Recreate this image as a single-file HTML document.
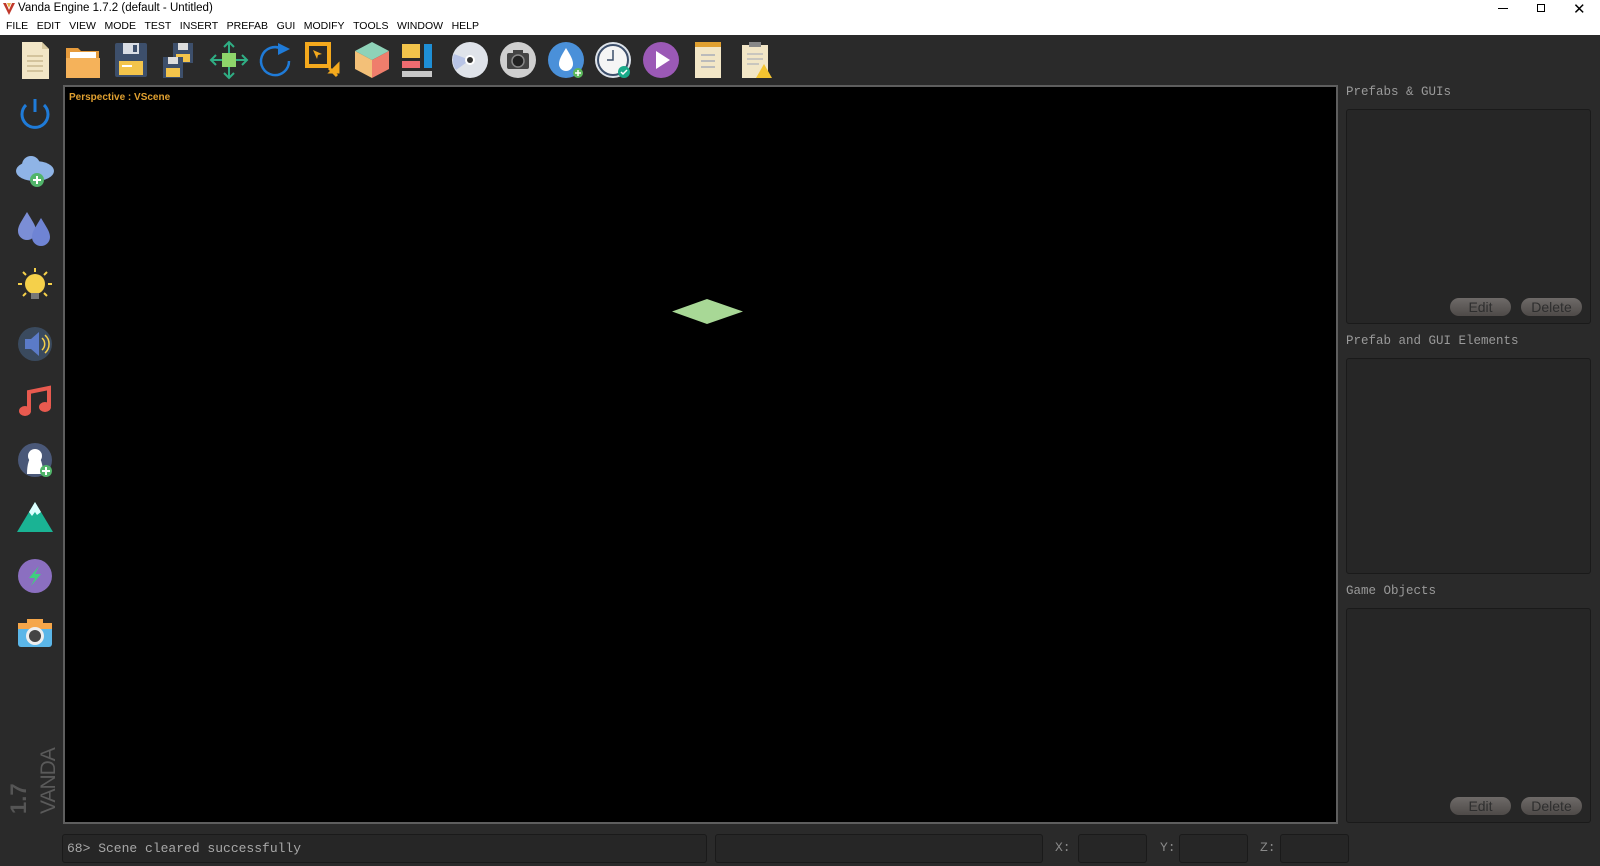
<!DOCTYPE html>
<html><head><meta charset="utf-8"><style>
*{margin:0;padding:0;box-sizing:border-box}
body{width:1600px;height:866px;overflow:hidden;background:#2a2a2a;font-family:"Liberation Sans",sans-serif;position:relative}
.a{position:absolute}
#top{left:0;top:0;width:1600px;height:35px;background:#fff}
#title{left:18px;top:2px;font-size:11.5px;color:#000}
#menu{left:6px;top:20px;font-size:10.5px;color:#000;word-spacing:0}
#menu span{margin-right:8.5px}
#tb{left:0;top:35px;width:1600px;height:48px;background:#2a2a2a}
#vp{left:63px;top:85px;width:1275px;height:739px;background:#000;border:2px solid #5e5e5e}
#persp{left:69px;top:92px;font-size:10px;font-weight:bold;color:#e0a030}
.lbl{position:absolute;left:1346px;font-family:"Liberation Mono",monospace;font-size:12.5px;color:#9a9a9a}
.box{position:absolute;left:1346px;width:245px;background:#262626;border:1px solid #1a1a1a;border-radius:3px}
.btn{position:absolute;width:61px;height:18px;border-radius:9px;background:linear-gradient(#6e6a68,#4e4a48);color:#2e2e2e;font-size:14px;text-align:center;line-height:18px}
.sb{position:absolute;top:834px;height:29px;background:#262626;border:1px solid #1a1a1a;border-radius:3px}
.xyz{position:absolute;top:840px;font-family:"Liberation Mono",monospace;font-size:13px;color:#8a8a8a}
</style></head><body>
<div class="a" id="top"></div>
<svg class="a" style="left:2px;top:2px" width="14" height="14"><path d="M1 1 L7 13 L13 1 L10 1 L7 8 L4 1Z" fill="#c0392b"/><path d="M5 1 L7 6 L9 1" fill="#e8b04a"/></svg>
<div class="a" id="title">Vanda Engine 1.7.2 (default - Untitled)</div>
<div class="a" id="menu"><span>FILE</span><span>EDIT</span><span>VIEW</span><span>MODE</span><span>TEST</span><span>INSERT</span><span>PREFAB</span><span>GUI</span><span>MODIFY</span><span>TOOLS</span><span>WINDOW</span><span>HELP</span></div>
<div class="a" style="left:1498px;top:8px;width:10px;height:1px;background:#000"></div>
<div class="a" style="left:1537px;top:4px;width:8px;height:8px;border:1px solid #000"></div>
<div class="a" style="left:1573px;top:0px;font-size:15px;color:#000">✕</div>
<div class="a" id="tb"></div>
<svg class="a" style="left:0;top:40px" width="800" height="40">
<g transform="translate(22,2)"><path d="M0 0h20l7 7v30H0z" fill="#f2e6c6"/><path d="M20 0v7h7" fill="#d8c9a0"/><g stroke="#c9b98f" stroke-width="1.5"><path d="M5 14h16M5 19h16M5 24h16M5 29h16"/></g></g>
<g transform="translate(66,4)"><path d="M0 4h12l3 3h18v27H0z" fill="#e69b3c"/><rect x="4" y="8" width="26" height="10" fill="#fff"/><path d="M0 14h34v20H0z" fill="#f5b25a"/></g>
<g transform="translate(115,3)"><rect width="32" height="34" fill="#3d4f6b" rx="2"/><rect x="8" y="0" width="16" height="11" fill="#d9dde4"/><rect x="18" y="2" width="4" height="7" fill="#3d4f6b"/><rect x="4" y="18" width="24" height="14" fill="#f3c44b"/><rect x="7" y="22" width="10" height="2" fill="#fff"/></g>
<g transform="translate(163,3)"><rect x="10" width="20" height="20" fill="#3d4f6b"/><rect x="15" width="10" height="7" fill="#ddd"/><rect x="13" y="11" width="14" height="8" fill="#f3c44b"/><rect x="0" y="14" width="20" height="21" fill="#3d4f6b"/><rect x="5" y="14" width="10" height="7" fill="#ddd"/><rect x="3" y="25" width="14" height="9" fill="#f3c44b"/></g>
<g transform="translate(211,2)" stroke="#2fae84" stroke-width="2" fill="none"><path d="M18 0v36M0 18h36M13 5l5-5 5 5M13 31l5 5 5-5M5 13l-5 5 5 5M31 13l5 5-5 5"/><rect x="11" y="11" width="14" height="14" fill="#8ed46a" stroke="none"/></g>
<g transform="translate(258,3)"><path d="M24 6 A14 14 0 1 0 31 18" fill="none" stroke="#1f7bd8" stroke-width="2.5"/><path d="M20 0 L32 6 L20 12Z" fill="#1f7bd8"/></g>
<g transform="translate(305,2)"><rect width="26" height="26" fill="#f4a91d"/><rect x="4" y="4" width="18" height="18" fill="#2a2a2a"/><path d="M8 8l9 4-4 1-1 4z" fill="#f4a91d"/><path d="M26 30l7 0 0-7z M24 26 l8 8" fill="#f4a91d" stroke="#f4a91d" stroke-width="3"/></g>
<g transform="translate(354,2)"><path d="M18 0 L35 9 L18 18 L1 9Z" fill="#8ed2b8"/><path d="M1 9 L18 18 V36 L1 27Z" fill="#f3c078"/><path d="M35 9 L18 18 V36 L35 27Z" fill="#ef7e6c"/></g>
<g transform="translate(402,2)"><rect x="0" y="2" width="18" height="14" fill="#f3c44b"/><rect x="22" y="2" width="8" height="24" fill="#1e8fd6"/><rect x="0" y="19" width="18" height="7" fill="#ee6b70"/><rect x="0" y="29" width="30" height="6" fill="#c8c8c8"/></g>
<g transform="translate(452,2)"><circle cx="18" cy="18" r="18" fill="#dfe3ea"/><path d="M18 18 L4 28 A18 18 0 0 1 2 12Z" fill="#b8c4e6"/><circle cx="18" cy="18" r="5" fill="#fff"/><circle cx="18" cy="18" r="3" fill="#333"/></g>
<g transform="translate(500,2)"><circle cx="18" cy="18" r="18" fill="#cfcfcf"/><rect x="7" y="11" width="22" height="16" rx="2" fill="#444"/><rect x="13" y="8" width="10" height="4" fill="#444"/><circle cx="18" cy="19" r="6" fill="#222" stroke="#888" stroke-width="1.5"/></g>
<g transform="translate(548,2)"><circle cx="18" cy="18" r="18" fill="#4a90d9"/><path d="M18 6 C13 14 11 18 11 22 A7 7 0 0 0 25 22 C25 18 23 14 18 6Z" fill="#fff"/><circle cx="30" cy="31" r="5" fill="#5cb85c"/><path d="M30 28v6M27 31h6" stroke="#fff" stroke-width="1.5"/></g>
<g transform="translate(595,2)"><circle cx="18" cy="18" r="18" fill="#dde3ea"/><circle cx="18" cy="18" r="15" fill="#f5f5f5" stroke="#3d4f6b" stroke-width="2"/><path d="M18 8v10h-6" stroke="#3d4f6b" stroke-width="1.5" fill="none"/><circle cx="29" cy="30" r="6" fill="#1aab8a"/><path d="M26 30l2 2 4-4" stroke="#fff" stroke-width="1.5" fill="none"/></g>
<g transform="translate(643,2)"><circle cx="18" cy="18" r="18" fill="#9b59b6"/><path d="M13 9 L27 18 L13 27Z" fill="#fff"/></g>
<g transform="translate(692,2)"><rect x="3" y="2" width="26" height="34" fill="#f2e6c6"/><rect x="3" y="0" width="26" height="5" fill="#e0a030"/><g stroke="#bbb" stroke-width="2"><path d="M9 13h14M9 19h14M9 25h14"/></g></g>
<g transform="translate(740,2)"><rect x="2" y="3" width="26" height="33" fill="#f2e6c6"/><rect x="9" y="0" width="12" height="5" fill="#888"/><g stroke="#bbb" stroke-width="1.5"><path d="M7 12h16M7 17h16M7 22h12"/></g><path d="M24 22 L32 36 L16 36Z" fill="#f4c430"/></g>
</svg>
<svg class="a" style="left:0;top:85px" width="62" height="740">
<g transform="translate(35,29)"><path d="M-9 -9 A13 13 0 1 0 9 -9" fill="none" stroke="#1f7bd8" stroke-width="3"/><path d="M0 -15v13" stroke="#1f7bd8" stroke-width="3"/></g>
<g transform="translate(35,86)"><ellipse cx="0" cy="0" rx="19" ry="10" fill="#8fb4e6"/><circle cx="-4" cy="-6" r="9" fill="#8fb4e6"/><circle cx="2" cy="9" r="7" fill="#52b56b"/><path d="M2 5v8M-2 9h8" stroke="#fff" stroke-width="2"/></g>
<g transform="translate(35,143)"><path d="M-8 -16 C-14 -6 -17 -2 -17 3 A9 9 0 0 0 1 3 C1 -2 -2 -6 -8 -16Z" fill="#7b8ed6"/><path d="M6 -10 C0 0 -3 4 -3 9 A9 9 0 0 0 15 9 C15 4 12 0 6 -10Z" fill="#6f84d4"/></g>
<g transform="translate(35,201)"><circle cx="0" cy="-2" r="10" fill="#f5d04a"/><rect x="-4" y="7" width="8" height="6" fill="#777"/><g stroke="#f5d04a" stroke-width="2"><path d="M0 -18v4M-17 -2h4M13 -2h4M-12 -14l3 3M12 -14l-3 3M-12 10l3-3M12 10l-3-3"/></g></g>
<g transform="translate(35,259)"><circle r="17" fill="#3a4a5e"/><path d="M-10 -5h6l8-7v24l-8-7h-6z" fill="#5b7bc8"/><path d="M7 -6a8 8 0 0 1 0 12M10 -9a12 12 0 0 1 0 18" stroke="#f5d04a" stroke-width="1.5" fill="none"/></g>
<g transform="translate(35,317)"><path d="M-6 8V-10L14 -14V4" stroke="#e85a4f" stroke-width="4" fill="none"/><ellipse cx="-10" cy="9" rx="6" ry="5" fill="#e85a4f"/><ellipse cx="10" cy="5" rx="6" ry="5" fill="#e85a4f"/></g>
<g transform="translate(35,375)"><circle r="17" fill="#4a5878"/><path d="M-8 14 C-8 4 -6 -2 0 -10 C6 -2 8 4 8 14Z" fill="#fff"/><circle cy="-4" r="7" fill="#fff"/><circle cx="11" cy="11" r="6" fill="#52b56b"/><path d="M11 7v8M7 11h8" stroke="#fff" stroke-width="2"/></g>
<g transform="translate(35,433)"><path d="M0 -16 L18 14 H-18Z" fill="#1ab394"/><path d="M0 -16 L6 -6 L2 -3 L0 -6 L-3 -2 L-6 -6Z" fill="#dff"/></g>
<g transform="translate(35,491)"><circle r="17" fill="#8b6fc0"/><path d="M4 -10 L-6 2 H0 L-4 10 L6 -2 H0Z" fill="#3fcf7f"/></g>
<g transform="translate(35,549)"><rect x="-17" y="-11" width="34" height="24" rx="3" fill="#5bb6e8"/><rect x="-17" y="-11" width="34" height="6" fill="#f5a64a"/><rect x="-8" y="-15" width="16" height="5" fill="#f5a64a"/><circle cy="2" r="9" fill="#eee"/><circle cy="2" r="6" fill="#444"/></g>
</svg>
<div class="a" style="left:37px;top:814px;transform:rotate(-90deg);transform-origin:0 0;font-size:21px;color:#5a5a5a;letter-spacing:-1px">VANDA</div>
<div class="a" style="left:6px;top:814px;transform:rotate(-90deg);transform-origin:0 0;font-size:22px;font-weight:bold;color:#555">1.7</div>
<div class="a" id="vp"></div>
<div class="a" id="persp">Perspective : VScene</div>
<svg class="a" style="left:672px;top:299px" width="71" height="25"><path d="M0 12.5 L35 0 L71 12.5 L35 25Z" fill="#a8d896"/></svg>
<div class="lbl" style="top:85px">Prefabs &amp; GUIs</div>
<div class="box" style="top:109px;height:215px"></div>
<div class="btn" style="left:1450px;top:298px">Edit</div>
<div class="btn" style="left:1521px;top:298px">Delete</div>
<div class="lbl" style="top:334px">Prefab and GUI Elements</div>
<div class="box" style="top:358px;height:216px"></div>
<div class="lbl" style="top:584px">Game Objects</div>
<div class="box" style="top:608px;height:215px"></div>
<div class="btn" style="left:1450px;top:797px">Edit</div>
<div class="btn" style="left:1521px;top:797px">Delete</div>
<div class="sb" style="left:62px;width:645px"></div>
<div class="a" style="left:67px;top:841px;font-family:'Liberation Mono',monospace;font-size:13px;color:#a8a8a8">68&gt; Scene cleared successfully</div>
<div class="sb" style="left:715px;width:328px"></div>
<div class="xyz" style="left:1055px">X:</div>
<div class="sb" style="left:1078px;width:69px"></div>
<div class="xyz" style="left:1160px">Y:</div>
<div class="sb" style="left:1179px;width:69px"></div>
<div class="xyz" style="left:1260px">Z:</div>
<div class="sb" style="left:1280px;width:69px"></div>
</body></html>
